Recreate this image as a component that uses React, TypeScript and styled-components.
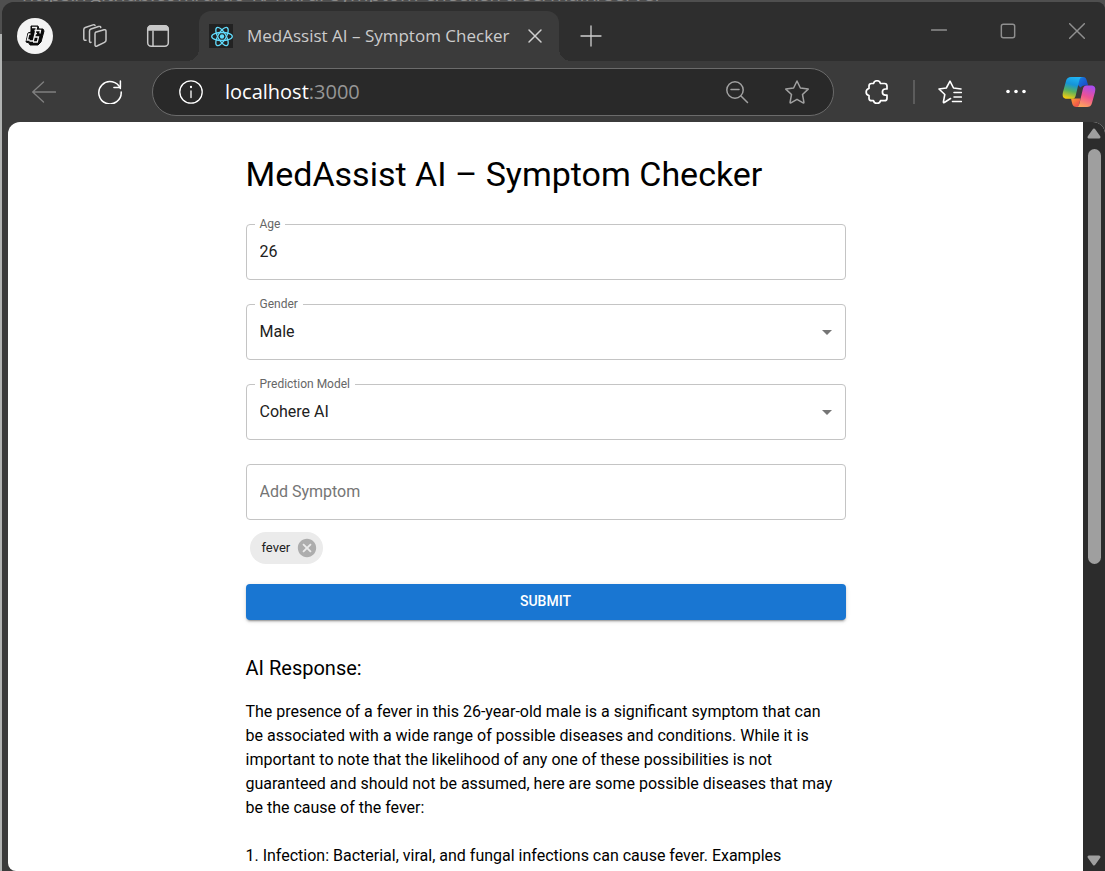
import React, { useState } from "react";
import styled, { createGlobalStyle, css } from "styled-components";

const GlobalStyle = createGlobalStyle`
  *, *::before, *::after { box-sizing: border-box; }
  body { margin: 0; background: #b1b3b2; overflow: hidden; }
  button, input, select { font: inherit; color: inherit; margin: 0; }
`;

const Desktop = styled.div`
  display: flex;
  flex-direction: column;
  height: 100vh;
  background: linear-gradient(#4f4f4f 34px, #b1b3b2 34px);
`;

const BackdropAddress = styled.div`
  display: flex;
  align-items: flex-end;
  flex: none;
  height: 2px;
  padding-left: 22px;
  overflow: hidden;
  color: #8a8a8a;
  background: #4f4f4f;
  font: 20px/16px "Open Sans", sans-serif;
  white-space: nowrap;
`;

const Window = styled.div`
  flex: 1;
  min-height: 0;
  margin-left: 2px;
  display: flex;
  flex-direction: column;
  overflow: hidden;
  border-radius: 12px 8px 0 0;
  background: #3b3b3b;
  font-family: "Open Sans", "Noto Sans", sans-serif;
`;

const TitleBar = styled.header`
  display: flex;
  flex: none;
  height: 59px;
  padding: 0 20px 0 15px;
  background: #2e2e2e;
`;

const IconButton = styled.button<{ $size?: number; $color?: string }>`
  display: flex;
  align-items: center;
  justify-content: center;
  flex: none;
  width: ${(p) => p.$size ?? 24}px;
  height: ${(p) => p.$size ?? 24}px;
  padding: 0;
  border: 0;
  background: none;
  color: ${(p) => p.$color ?? "#ffffff"};
  cursor: pointer;
`;

const TitleTools = styled.div`
  display: flex;
  align-items: center;
  gap: 39px;
  height: 68px;
  margin-right: 29px;
`;

const Profile = styled(IconButton)`
  border-radius: 50%;
  background: #f3f3f3;
  margin-right: -9px;
`;

const Tab = styled.div`
  position: relative;
  display: flex;
  align-items: center;
  width: 360px;
  height: 50px;
  margin-top: 9px;
  padding: 0 12px 0 10px;
  border-radius: 12px 12px 0 0;
  background: #3b3b3b;
  color: #cccccc;
  font-size: 17px;
  line-height: 24px;

  &::before, &::after {
    content: "";
    position: absolute;
    bottom: 0;
    width: 12px;
    height: 12px;
  }
  &::before {
    right: 100%;
    background: radial-gradient(circle at 0 0, transparent 12px, #3b3b3b 12px);
  }
  &::after {
    left: 100%;
    background: radial-gradient(circle at 100% 0, transparent 12px, #3b3b3b 12px);
  }
`;

const TabTitle = styled.span`
  flex: 1;
  margin-left: 14px;
  white-space: nowrap;
`;

const NewTab = styled.div`
  display: flex;
  align-items: center;
  height: 68px;
  margin-left: 20px;
`;

const WindowControls = styled.div`
  display: flex;
  align-items: center;
  gap: 53px;
  height: 58px;
  margin-left: auto;
`;

const Toolbar = styled.nav`
  display: flex;
  align-items: center;
  flex: none;
  height: 61px;
  padding: 0 9px 0 30px;
`;

const NavTools = styled.div`
  display: flex;
  gap: 42px;
  margin-right: 30px;
`;

const AddressBar = styled.div`
  display: flex;
  flex: 1;
  align-items: center;
  min-width: 0;
  height: 48px;
  padding: 0 24px 0 26px;
  border: 1px solid #6b6b6b;
  border-radius: 24px;
  background: #292929;
`;

const Address = styled.div`
  flex: 1;
  margin-left: 22px;
  color: #969696;
  font-size: 20px;
  line-height: 28px;
`;

const Host = styled.span`
  color: #ffffff;
`;

const AddressTools = styled.div`
  display: flex;
  gap: 36px;
`;

const Divider = styled.span`
  width: 2px;
  height: 24px;
  margin: 0 23px 0 24px;
  background: #5c5c5c;
`;

const Extensions = styled.div`
  display: flex;
  align-items: center;
  margin-left: 31px;
`;

const MenuTools = styled.div`
  display: flex;
  align-items: center;
  gap: 42px;
  margin-right: 34px;
`;

const Viewport = styled.div`
  display: flex;
  flex: 1;
  min-height: 0;
  margin-left: 6px;
  border-radius: 12px 12px 0 8px;
  overflow: hidden;
  background: #ffffff;
`;

const Page = styled.main`
  flex: 1;
  min-width: 0;
  overflow: hidden;
  color: #000000;
  font-family: Roboto, sans-serif;
  font-size: 16px;
  line-height: 24px;
`;

const Container = styled.div`
  width: 100%;
  max-width: 600px;
  margin: 0 auto;
  padding: 32px 0;
`;

const Heading = styled.h1`
  margin: 0 0 30px;
  font-size: 34px;
  line-height: 40px;
  font-weight: 400;
`;

const SubHeading = styled.h2`
  margin: 32px 0 16px;
  font-size: 20px;
  line-height: 32px;
  font-weight: 400;
`;

const Form = styled.form`
  display: flex;
  flex-direction: column;
`;

const Field = styled.div`
  position: relative;
  height: 56px;
  margin-bottom: 24px;
`;

const control = css`
  display: block;
  width: 100%;
  height: 56px;
  padding: 0 13px;
  border: 1px solid #c4c4c4;
  border-radius: 4px;
  outline: 0;
  background: transparent;
  color: #212121;
  &::placeholder { color: #757575; opacity: 1; }
`;

const Input = styled.input`
  ${control}
  padding-bottom: 2px;
`;

const Select = styled.select`
  ${control}
  appearance: none;
`;

const FieldLabel = styled.label`
  position: absolute;
  top: -8px;
  left: 9px;
  padding: 0 5px;
  background: #ffffff;
  color: #666666;
  font-size: 12px;
  line-height: 16px;
`;

const SelectArrow = styled.svg`
  position: absolute;
  top: 16px;
  right: 7px;
  fill: #757575;
  pointer-events: none;
`;

const ChipRow = styled.div`
  display: flex;
  gap: 8px;
  margin: -12px 4px 20px;
`;

const Chip = styled.span`
  display: flex;
  align-items: center;
  gap: 6px;
  height: 32px;
  padding: 0 5px 0 12px;
  border-radius: 16px;
  background: #ebebeb;
  color: #212121;
  font-size: 13px;
`;

const Submit = styled.button`
  height: 36px;
  padding: 0 16px 2px;
  border: 0;
  border-radius: 4px;
  background: #1976d2;
  color: #ffffff;
  font-size: 14px;
  font-weight: 500;
  text-transform: uppercase;
  box-shadow: 0 3px 1px -2px rgba(0, 0, 0, 0.2), 0 2px 2px 0 rgba(0, 0, 0, 0.14),
    0 1px 5px 0 rgba(0, 0, 0, 0.12);
  cursor: pointer;
`;

const Paragraph = styled.p`
  margin: 0 0 24px;
  padding-right: 8px;
`;

const ScrollBar = styled.div`
  display: flex;
  flex-direction: column;
  align-items: center;
  flex: none;
  width: 22px;
  padding: 5px 0 3px;
  background: #2c2c2c;
`;

const Thumb = styled.div`
  flex: 415 0 0;
  width: 13px;
  margin-top: 8px;
  border-radius: 7px;
  background: #9f9f9f;
`;

const Track = styled.div`
  flex: 290 0 0;
`;

const Line = ({ size = 24, width = 1.3, children }: { size?: number; width?: number; children: React.ReactNode }) => (
  <svg width={size} height={size} viewBox="0 0 24 24" fill="none" stroke="currentColor" strokeWidth={width} strokeLinecap="round" strokeLinejoin="round" aria-hidden="true">
    {children}
  </svg>
);

const ProfileLogo = () => (
  <svg width="20" height="22" viewBox="0 0 20 22" fill="none" stroke="#0b0b0b" aria-hidden="true">
    <path d="M6 1h7l1 3h4l1 2-3 11-3 3H5l-1-2-3-1 2-9 3-1z" fill="#0b0b0b" strokeWidth="1" strokeLinejoin="round" />
    <path d="M7 2.500h4.500L8.300 16H4.500M5.500 9H3.800l-1.500 6h2.500M9.500 5.500h6l-.6 3M12 8.500h-1.500l-1 3.500h4l-1.200 5H8" stroke="#f3f3f3" strokeWidth="1.300" />
  </svg>
);

const ReactLogo = () => (
  <svg width="24" height="24" viewBox="0 0 24 24" aria-hidden="true">
    <rect width="24" height="24" fill="#222222" />
    <g fill="none" stroke="#61dafb" strokeWidth="1.300">
      <ellipse cx="13" cy="12.500" rx="10.300" ry="4" />
      <ellipse cx="13" cy="12.500" rx="10.300" ry="4" transform="rotate(60 13 12.500)" />
      <ellipse cx="13" cy="12.500" rx="10.300" ry="4" transform="rotate(120 13 12.500)" />
    </g>
    <circle cx="13" cy="12.500" r="2.200" fill="#61dafb" />
  </svg>
);

const CopilotLogo = () => (
  <svg width="34" height="32" viewBox="0 0 34 32" aria-hidden="true">
    <defs>
      <linearGradient id="cpLeft" x1="0.6" y1="0" x2="0.35" y2="1">
        <stop offset="0" stopColor="#20b4f4" />
        <stop offset="0.35" stopColor="#1694d8" />
        <stop offset="0.65" stopColor="#56b060" />
        <stop offset="1" stopColor="#f4cc10" />
      </linearGradient>
      <linearGradient id="cpTop" x1="0" y1="0" x2="1" y2="1">
        <stop offset="0" stopColor="#1783e2" />
        <stop offset="1" stopColor="#1a3fc4" />
      </linearGradient>
      <linearGradient id="cpRight" x1="0.7" y1="0" x2="0.35" y2="1">
        <stop offset="0" stopColor="#a84cf0" />
        <stop offset="0.5" stopColor="#ee5293" />
        <stop offset="1" stopColor="#ffa45c" />
      </linearGradient>
      <linearGradient id="cpBottom" x1="0" y1="0" x2="1" y2="1">
        <stop offset="0" stopColor="#ff9b35" />
        <stop offset="1" stopColor="#e83b51" />
      </linearGradient>
    </defs>
    <path d="M16 1h5c2 0 3 1 3.600 3l1.600 5.500h-2.200c-2.500 0-4 .2-5.500 2L16 9z" fill="url(#cpTop)" />
    <path d="M9 22.500h9.500L17 29c-.5 1.500-1.200 2-2.500 2-2.300 0-3.600-1-4.200-3z" fill="url(#cpBottom)" />
    <path d="M9 1h12c-2 0-3 1-3.600 3L13.600 20c-.6 2-1.600 2.800-3.600 2.800H5c-4 0-5-2.800-4-6.800L4 5c.8-3 2.500-4 5-4z" fill="url(#cpLeft)" />
    <path d="M25 31H14c2 0 2.800-1 3.300-3l3.700-15.500c.6-2 1.700-3 3.700-3H29c4 0 5 2.500 4 6.500l-3 11c-.8 3-2.500 4-5 4z" fill="url(#cpRight)" />
  </svg>
);

const ScrollArrow = ({ down }: { down?: boolean }) => (
  <svg width="16" height="14" viewBox="0 0 16 14" aria-hidden="true">
    <path d={down ? "M3 3h10l-5 7z" : "M3 10h10L8 3z"} fill="#9f9f9f" stroke="#9f9f9f" strokeWidth="3" strokeLinejoin="round" />
  </svg>
);

const STAR = "M12 1.500l3.200 6.600 7.300 1-5.300 5.100 1.300 7.300-6.500-3.500-6.500 3.500 1.300-7.300L1.500 9.100l7.300-1z";

export default function App() {
  const [age, setAge] = useState("26");
  const [symptoms, setSymptoms] = useState(["fever"]);

  return (
    <>
      <GlobalStyle />
      <Desktop>
        <BackdropAddress aria-hidden="true">https://github.com/arao-K/1M/ai-symptom-checker/tree/main/server</BackdropAddress>
        <Window>
          <TitleBar>
            <TitleTools>
              <Profile type="button" $size={36} aria-label="Profile"><ProfileLogo /></Profile>
              <IconButton type="button" $color="#c8c8c8" aria-label="Workspaces">
                <Line width={1.5}>
                  <path d="M12.500 8.300l8.500-2.500q2-.5 2 1.500v9q0 1.500-1.500 2l-7.500 3.700q-2 .8-2-1.200v-10.500q0-1.500.5-2z" />
                  <path d="M8 18.300q-1.500.5-1.500-1.300V7q0-1.500 1.500-2l7.500-2.500q2-.5 2.300 1" />
                  <path d="M3 16.300Q.8 16.500.8 14.800V5.500q0-1.500 1.500-2L10 .9q1.500-.4 2 .5" />
                </Line>
              </IconButton>
              <IconButton type="button" $color="#c8c8c8" aria-label="Tab actions">
                <Line width={1.5}>
                  <rect x="1.700" y="1.700" width="20.600" height="20.600" rx="3.500" />
                  <path d="M2 6V5q0-3 3-3h14q3 0 3 3v1z" fill="currentColor" />
                  <path d="M7 7v15" />
                </Line>
              </IconButton>
            </TitleTools>
            <Tab>
              <ReactLogo />
              <TabTitle>MedAssist AI – Symptom Checker</TabTitle>
              <IconButton type="button" $color="#cfcfcf" aria-label="Close tab">
                <Line width={1.5}><path d="M6 6l12 12M18 6L6 18" /></Line>
              </IconButton>
            </Tab>
            <NewTab>
              <IconButton type="button" $color="#cfcfcf" aria-label="New tab">
                <Line><path d="M12 2v20M2 12h20" /></Line>
              </IconButton>
            </NewTab>
            <WindowControls>
              <IconButton type="button" $size={16} $color="#8f8f8f" aria-label="Minimize">
                <Line size={16} width={2.4}><path d="M1 10.500h22" /></Line>
              </IconButton>
              <IconButton type="button" $size={16} $color="#8f8f8f" aria-label="Maximize">
                <Line size={16} width={2.2}><rect x="2" y="2" width="20" height="20" rx="3" /></Line>
              </IconButton>
              <IconButton type="button" $size={16} $color="#8f8f8f" aria-label="Close window">
                <Line size={16} width={2.2}><path d="M1 1l22 22M23 1L1 23" /></Line>
              </IconButton>
            </WindowControls>
          </TitleBar>

          <Toolbar>
            <NavTools>
              <IconButton type="button" $color="#808080" aria-label="Back">
                <Line><path d="M23.500 12H.7M11.500 2L.7 12l10.800 10" /></Line>
              </IconButton>
              <IconButton type="button" aria-label="Refresh">
                <Line width={1.5}>
                  <path d="M22.400 8.500A11.200 11.200 0 1 0 23.200 12" />
                  <path d="M22.400 1v6.500h-6.500" />
                </Line>
              </IconButton>
            </NavTools>
            <AddressBar>
              <IconButton type="button" aria-label="Site information">
                <Line>
                  <circle cx="12" cy="12" r="11.200" />
                  <path d="M12 11v6.500" />
                  <circle cx="12" cy="7" r=".5" fill="currentColor" />
                </Line>
              </IconButton>
              <Address><Host>localhost</Host>:3000</Address>
              <AddressTools>
                <IconButton type="button" $color="#a0a0a0" aria-label="Zoom">
                  <Line width={1.5}>
                    <circle cx="10" cy="10" r="8.200" />
                    <path d="M6 9.500h8M16 16l6.500 6.500" />
                  </Line>
                </IconButton>
                <IconButton type="button" $color="#a0a0a0" aria-label="Add to favorites">
                  <Line width={1.5}><path d="M12 1l3.400 7 7.800 1.100-5.700 5.400 1.400 7.700q.1 1-.8.7L12 19.300l-6.100 3.600q-.9.300-.8-.7l1.400-7.700L.8 9.100 8.600 8z" /></Line>
                </IconButton>
              </AddressTools>
            </AddressBar>
            <Extensions>
              <IconButton type="button" aria-label="Extensions">
                <Line width={1.7}>
                  <path d="M8.500 3.500a3.600 3.600 0 0 1 7 0h4q2.500 0 2.500 2.500v3h-1.500a3.100 3.100 0 0 0 0 6.200H22v3q0 2.500-2.500 2.500h-4a3.600 3.600 0 0 1-7 0H6.500Q4 20.700 4 18.200v-2.500a3.700 3.700 0 0 1 0-7.200V6q0-2.500 2.500-2.500z" />
                </Line>
              </IconButton>
              <Divider />
              <MenuTools>
                <IconButton type="button" aria-label="Favorites">
                  <Line width={1.6}>
                    <path d="M12.500 18.500L6.300 22.500q-1 .4-.9-.7l1.400-7.300L1 9l7.300-1L12 1.200 15.500 8l7.500 1" />
                    <path d="M16 12.500h7.300M16 17h7.300M14.500 21.500h8.800" />
                  </Line>
                </IconButton>
                <IconButton type="button" aria-label="Settings and more">
                  <svg width="24" height="24" fill="currentColor" aria-hidden="true">
                    <circle cx="4" cy="11.500" r="1.800" />
                    <circle cx="12" cy="11.500" r="1.800" />
                    <circle cx="20" cy="11.500" r="1.800" />
                  </svg>
                </IconButton>
              </MenuTools>
              <IconButton type="button" $size={34} aria-label="Copilot"><CopilotLogo /></IconButton>
            </Extensions>
          </Toolbar>

          <Viewport>
            <Page>
              <Container>
                <Heading>MedAssist AI – Symptom Checker</Heading>
                <Form onSubmit={(e) => e.preventDefault()}>
                  <Field>
                    <Input id="age" value={age} onChange={(e) => setAge(e.target.value)} />
                    <FieldLabel htmlFor="age">Age</FieldLabel>
                  </Field>
                  <Field>
                    <Select id="gender" defaultValue="Male">
                      <option>Male</option>
                    </Select>
                    <FieldLabel htmlFor="gender">Gender</FieldLabel>
                    <SelectArrow width="24" height="24" viewBox="0 0 24 24"><path d="M7 10l5 5 5-5z" /></SelectArrow>
                  </Field>
                  <Field>
                    <Select id="model" defaultValue="Cohere AI">
                      <option>Cohere AI</option>
                    </Select>
                    <FieldLabel htmlFor="model">Prediction Model</FieldLabel>
                    <SelectArrow width="24" height="24" viewBox="0 0 24 24"><path d="M7 10l5 5 5-5z" /></SelectArrow>
                  </Field>
                  <Field>
                    <Input aria-label="Add Symptom" placeholder="Add Symptom" />
                  </Field>
                  <ChipRow>
                    {symptoms.map((s) => (
                      <Chip key={s}>
                        {s}
                        <IconButton type="button" $size={22} $color="#adadad" aria-label={`Remove ${s}`} onClick={() => setSymptoms(symptoms.filter((x) => x !== s))}>
                          <svg width="22" height="22" viewBox="0 0 24 24" fill="currentColor" aria-hidden="true">
                            <path d="M12 2C6.470 2 2 6.470 2 12s4.470 10 10 10 10-4.470 10-10S17.530 2 12 2zm5 13.590L15.590 17 12 13.410 8.410 17 7 15.590 10.590 12 7 8.410 8.410 7 12 10.590 15.590 7 17 8.410 13.410 12 17 15.590z" />
                          </svg>
                        </IconButton>
                      </Chip>
                    ))}
                  </ChipRow>
                  <Submit type="submit">Submit</Submit>
                </Form>
                <SubHeading>AI Response:</SubHeading>
                <Paragraph>
                  The presence of a fever in this 26-year-old male is a significant symptom that can be
                  associated with a wide range of possible diseases and conditions. While it is important to
                  note that the likelihood of any one of these possibilities is not guaranteed and should not
                  be assumed, here are some possible diseases that may be the cause of the fever:
                </Paragraph>
                <Paragraph>1. Infection: Bacterial, viral, and fungal infections can cause fever. Examples</Paragraph>
              </Container>
            </Page>
            <ScrollBar aria-hidden="true">
              <ScrollArrow />
              <Thumb />
              <Track />
              <ScrollArrow down />
            </ScrollBar>
          </Viewport>
        </Window>
      </Desktop>
    </>
  );
}
